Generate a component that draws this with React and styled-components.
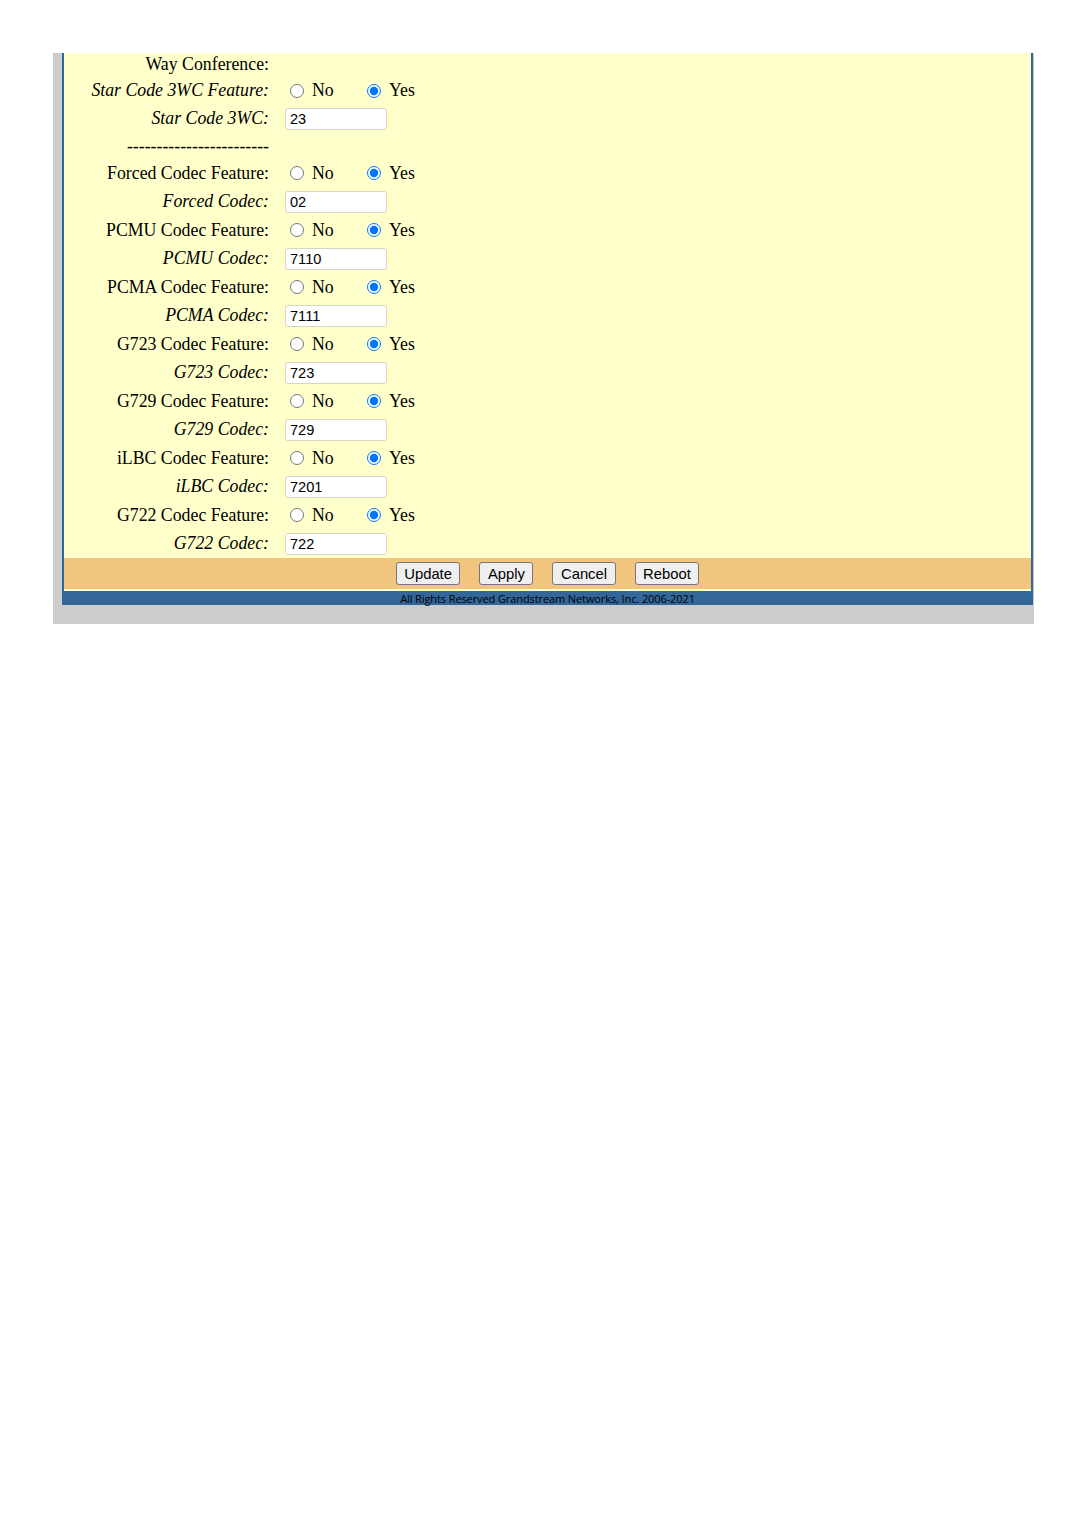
import React from "react";
import styled, { createGlobalStyle } from "styled-components";

const Global = createGlobalStyle`
  html, body { margin: 0; padding: 0; background: #ffffff; }
  body { font-family: "Liberation Serif", "Times New Roman", serif; }
`;

const Page = styled.div`
  padding: 53px 0 0 53px;
`;

const Frame = styled.div`
  width: 971px;
  background: #cccccc;
  padding: 0 1px 19px 9px;
`;

const Panel = styled.div`
  border-left: 2px solid #336699;
  border-right: 2px solid #336699;
  background: #ffffcc;
`;

const Form = styled.div`
  display: grid;
  grid-template-columns: 205px 1fr;
  column-gap: 16px;
`;

const Label = styled.div`
  display: flex;
  align-items: center;
  justify-content: flex-end;
  box-sizing: border-box;
  height: ${(p) => p.$h}px;
  padding-top: ${(p) => p.$pt}px;
  font-size: 17.8px;
  font-style: ${(p) => (p.$italic ? "italic" : "normal")};
  color: #000;
  white-space: nowrap;
`;

const Value = styled.div`
  display: flex;
  align-items: center;
  box-sizing: border-box;
  height: ${(p) => p.$h}px;
  padding-top: ${(p) => p.$pt}px;
`;

const Option = styled.label`
  display: flex;
  align-items: center;
  width: ${(p) => (p.$w ? p.$w + "px" : "auto")};
  font-size: 17.8px;
  color: #000;
`;

const Radio = styled.input.attrs({ type: "radio" })`
  width: 14px;
  height: 14px;
  margin: 0 8px 0 5px;
  accent-color: #0075ff;
`;

const TextInput = styled.input.attrs({ type: "text" })`
  width: 102px;
  height: 22px;
  box-sizing: border-box;
  border: 1px solid #d6d6c4;
  border-radius: 3px;
  background: #fff;
  padding: 0 4px;
  font-family: "Liberation Sans", Arial, sans-serif;
  font-size: 14.6px;
  color: #000;
  margin: 0;
  outline: none;
`;

const ButtonBar = styled.div`
  background: #f2c57e;
  border-top: 1px solid #ffffcc;
  border-bottom: 2px solid #ffffcc;
  height: 31px;
  display: flex;
  align-items: center;
  justify-content: center;
  gap: 19px;
`;

const Button = styled.button`
  height: 23px;
  padding: 0 7.5px;
  font-family: "Liberation Sans", Arial, sans-serif;
  font-size: 14.8px;
  color: #000;
  background: #efefef;
  border: 1px solid #767676;
  border-radius: 3px;
`;

const Footer = styled.div`
  background: #336699;
  height: 14px;
  display: flex;
  align-items: center;
  justify-content: center;
  font-family: "Open Sans", "DejaVu Sans", sans-serif;
  font-size: 11px;
  color: #000;
  letter-spacing: -0.1px;
`;

const rows = [
  { label: "Way Conference:", h: 22, pt: 0, kind: "text" },
  { label: "Star Code 3WC Feature:", italic: true, h: 28, pt: 3, kind: "radio" },
  { label: "Star Code 3WC:", italic: true, h: 29, pt: 2, kind: "input", value: "23" },
  { label: "------------------------", h: 26, pt: 2, kind: "text" },
  { label: "Forced Codec Feature:", h: 28, pt: 2, kind: "radio" },
  { label: "Forced Codec:", italic: true, h: 29, pt: 2, kind: "input", value: "02" },
  { label: "PCMU Codec Feature:", h: 28, pt: 2, kind: "radio" },
  { label: "PCMU Codec:", italic: true, h: 29, pt: 2, kind: "input", value: "7110" },
  { label: "PCMA Codec Feature:", h: 28, pt: 2, kind: "radio" },
  { label: "PCMA Codec:", italic: true, h: 29, pt: 2, kind: "input", value: "7111" },
  { label: "G723 Codec Feature:", h: 28, pt: 2, kind: "radio" },
  { label: "G723 Codec:", italic: true, h: 29, pt: 2, kind: "input", value: "723" },
  { label: "G729 Codec Feature:", h: 28, pt: 2, kind: "radio" },
  { label: "G729 Codec:", italic: true, h: 29, pt: 2, kind: "input", value: "729" },
  { label: "iLBC Codec Feature:", h: 28, pt: 2, kind: "radio" },
  { label: "iLBC Codec:", italic: true, h: 29, pt: 2, kind: "input", value: "7201" },
  { label: "G722 Codec Feature:", h: 28, pt: 2, kind: "radio" },
  { label: "G722 Codec:", italic: true, h: 29, pt: 2, kind: "input", value: "722" },
];

export default function App() {
  return (
    <>
      <Global />
      <Page>
        <Frame>
          <Panel>
            <Form>
              {rows.map((r, i) => (
                <React.Fragment key={i}>
                  <Label $h={r.h} $pt={r.pt} $italic={r.italic}>
                    {r.label}
                  </Label>
                  <Value $h={r.h} $pt={r.pt}>
                    {r.kind === "radio" && (
                      <>
                        <Option $w={77}>
                          <Radio name={"r" + i} />
                          No
                        </Option>
                        <Option>
                          <Radio name={"r" + i} defaultChecked />
                          Yes
                        </Option>
                      </>
                    )}
                    {r.kind === "input" && <TextInput defaultValue={r.value} />}
                  </Value>
                </React.Fragment>
              ))}
            </Form>
            <ButtonBar>
              <Button>Update</Button>
              <Button>Apply</Button>
              <Button>Cancel</Button>
              <Button>Reboot</Button>
            </ButtonBar>
            <Footer>All Rights Reserved Grandstream Networks, Inc. 2006-2021</Footer>
          </Panel>
        </Frame>
      </Page>
    </>
  );
}
